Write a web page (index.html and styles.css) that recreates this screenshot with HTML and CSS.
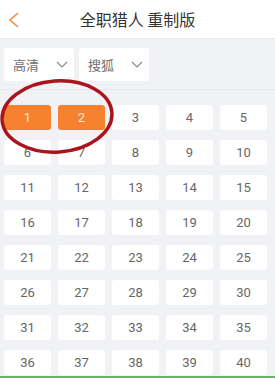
FILE: index.html
```html
<!DOCTYPE html>
<html>
	<head>
		<meta charset="UTF-8">
		<title>全职猎人 重制版</title>
		<link rel="stylesheet" href="styles.css">
	</head>
	<body>
		<div class="page">
			<div class="header">
				<span class="back">
					<svg width="14" height="18" viewBox="0 0 14 18"><path d="M11 2 L3 9 L11 16" fill="none" stroke="#ec8f45" stroke-width="1.6"/></svg>
				</span>
				<h1>全职猎人 重制版</h1>
			</div>
			<div class="filters">
				<div class="select">
					<span>高清</span>
					<svg width="12" height="7" viewBox="0 0 12 7"><path d="M1 1 L6 6 L11 1" fill="none" stroke="#8a8a8a" stroke-width="1.2"/></svg>
				</div>
				<div class="select">
					<span>搜狐</span>
					<svg width="12" height="7" viewBox="0 0 12 7"><path d="M1 1 L6 6 L11 1" fill="none" stroke="#8a8a8a" stroke-width="1.2"/></svg>
				</div>
			</div>
			<ul class="episodes">
				<li class="on">1</li>
				<li class="on">2</li>
				<li>3</li>
				<li>4</li>
				<li>5</li>
				<li>6</li>
				<li>7</li>
				<li>8</li>
				<li>9</li>
				<li>10</li>
				<li>11</li>
				<li>12</li>
				<li>13</li>
				<li>14</li>
				<li>15</li>
				<li>16</li>
				<li>17</li>
				<li>18</li>
				<li>19</li>
				<li>20</li>
				<li>21</li>
				<li>22</li>
				<li>23</li>
				<li>24</li>
				<li>25</li>
				<li>26</li>
				<li>27</li>
				<li>28</li>
				<li>29</li>
				<li>30</li>
				<li>31</li>
				<li>32</li>
				<li>33</li>
				<li>34</li>
				<li>35</li>
				<li>36</li>
				<li>37</li>
				<li>38</li>
				<li>39</li>
				<li>40</li>
			</ul>
			<!-- 手画的红圈标注 -->
			<svg class="mark" width="275" height="378" viewBox="0 0 275 378">
				<ellipse cx="57" cy="116.5" rx="55" ry="35.5" transform="rotate(-4 57 116.5)" fill="none" stroke="#ab131d" stroke-width="3.5"/>
				<rect x="0" y="376" width="275" height="2" fill="#5fb85f"/>
			</svg>
		</div>
	</body>
</html>
```

FILE: styles.css
```css
html,body,ul,li,h1{
	margin: 0;
	padding: 0;
}
body{
	background: #f1f2f5;
	font-family: Roboto, "Noto Sans CJK SC", sans-serif;
	overflow: hidden;
}
.page{
	position: relative;
	width: 275px;
	height: 378px;
	overflow: hidden;
}
.header{
	height: 38px;
	background: #fff;
	border-bottom: 1px solid #e6e7ea;
	display: flex;
	align-items: center;
	justify-content: center;
	position: relative;
}
.back{
	position: absolute;
	left: 7px;
	top: 11px;
}
.header h1{
	font-size: 16px;
	font-weight: normal;
	color: #333;
	font-family: "Noto Sans CJK SC", sans-serif;
}
.filters{
	display: flex;
	gap: 5px;
	padding: 9px 4px 8px;
	border-bottom: 1px solid #e7e8ec;
}
.select{
	width: 70px;
	height: 33px;
	background: #fff;
	border-radius: 3px;
	display: flex;
	align-items: center;
	justify-content: space-between;
	padding: 0 6px 0 9px;
	box-sizing: border-box;
	font-size: 13px;
	color: #707070;
	font-family: "Noto Sans CJK SC", sans-serif;
}
.episodes{
	list-style: none;
	display: grid;
	grid-template-columns: repeat(5, 47px);
	grid-auto-rows: 25px;
	column-gap: 7px;
	row-gap: 10px;
	padding: 15px 4px 0;
}
.episodes li{
	background: #fff;
	border-radius: 3px;
	display: flex;
	align-items: center;
	justify-content: center;
	font-size: 13px;
	color: #666;
}
.episodes li.on{
	background: #f6812f;
	color: #fde6d2;
}
.mark{
	position: absolute;
	left: 0;
	top: 0;
	pointer-events: none;
}
```
